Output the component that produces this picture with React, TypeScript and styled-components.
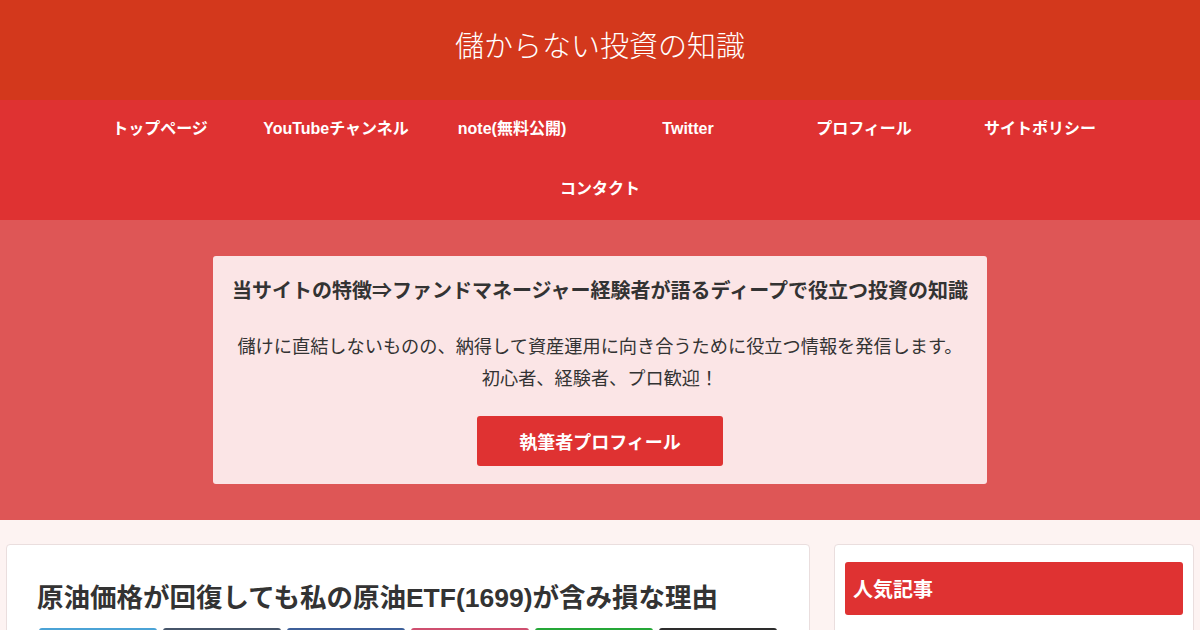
import styled, { createGlobalStyle } from 'styled-components';

const GlobalStyle = createGlobalStyle`
  body {
    margin: 0;
    background: #fdf3f2;
    font-family: 'Liberation Sans', 'Noto Sans CJK JP', sans-serif;
    color: #333;
  }
`;

const menuItems = [
  'トップページ',
  'YouTubeチャンネル',
  'note(無料公開)',
  'Twitter',
  'プロフィール',
  'サイトポリシー',
  'コンタクト',
];

const shareColors = ['#4ba3d6', '#46556a', '#3d5f99', '#cf4f6f', '#25a738', '#2d2d2d'];

export default function App() {
  return (
    <>
      <GlobalStyle />
      <Header>
        <SiteName>儲からない投資の知識</SiteName>
      </Header>
      <Nav>
        <Menu>
          {menuItems.map((item, index) => (
            <MenuItem key={index}>{item}</MenuItem>
          ))}
        </Menu>
      </Nav>
      <Appeal>
        <AppealCard>
          <AppealTitle>当サイトの特徴⇒ファンドマネージャー経験者が語るディープで役立つ投資の知識</AppealTitle>
          <AppealText>
            儲けに直結しないものの、納得して資産運用に向き合うために役立つ情報を発信します。
            <br />
            初心者、経験者、プロ歓迎！
          </AppealText>
          <AppealButton>執筆者プロフィール</AppealButton>
        </AppealCard>
      </Appeal>
      <Content>
        <Main>
          <EntryTitle>原油価格が回復しても私の原油ETF(1699)が含み損な理由</EntryTitle>
          <ShareRow>
            {shareColors.map((color, index) => (
              <ShareButton key={index} $color={color} />
            ))}
          </ShareRow>
        </Main>
        <Sidebar>
          <WidgetTitle>人気記事</WidgetTitle>
        </Sidebar>
      </Content>
    </>
  );
}

const Header = styled.header`
  height: 100px;
  background: #d3381c;
  display: flex;
  justify-content: center;
  align-items: center;
`;

const SiteName = styled.div`
  color: #fff;
  font-size: 29px;
  font-family: 'Noto Sans CJK JP', sans-serif;
  font-weight: 300;
  margin-top: -12px;
`;

const Nav = styled.nav`
  background: #df3232;
  display: flex;
  justify-content: center;
`;

const Menu = styled.ul`
  list-style: none;
  margin: 0;
  padding: 0;
  width: 1056px;
  display: flex;
  flex-wrap: wrap;
  justify-content: center;
`;

const MenuItem = styled.li`
  width: 176px;
  height: 60px;
  line-height: 20px;
  display: flex;
  align-items: center;
  justify-content: center;
  color: #fff;
  font-weight: bold;
  font-size: 16px;
  padding-bottom: 3px;
  box-sizing: border-box;
`;

const Appeal = styled.section`
  background: #de5656;
  padding: 36px 0;
  display: flex;
  justify-content: center;
`;

const AppealCard = styled.div`
  width: 774px;
  height: 228px;
  box-sizing: border-box;
  background: #fbe5e6;
  border-radius: 3px;
  padding-top: 21px;
  display: flex;
  flex-direction: column;
  align-items: center;
`;

const AppealTitle = styled.div`
  font-weight: bold;
  font-size: 20px;
  line-height: 28px;
  color: #333;
  white-space: nowrap;
`;

const AppealText = styled.p`
  margin: 26px 0 0;
  font-size: 18.2px;
  line-height: 32px;
  text-align: center;
  color: #333;
  white-space: nowrap;
`;

const AppealButton = styled.div`
  margin-top: 21px;
  width: 246px;
  height: 50px;
  border-radius: 3px;
  background: #df3232;
  color: #fff;
  font-weight: bold;
  font-size: 18px;
  display: flex;
  align-items: center;
  justify-content: center;
`;

const Content = styled.div`
  display: flex;
  gap: 24px;
  padding: 24px 6px 0;
`;

const Main = styled.main`
  width: 804px;
  height: 120px;
  box-sizing: border-box;
  background: #fff;
  border: 1px solid #eadede;
  border-radius: 4px;
  padding: 33px 30px 0;
`;

const EntryTitle = styled.h1`
  margin: 0;
  font-size: 26.5px;
  line-height: 40px;
  font-weight: bold;
  color: #333;
`;

const ShareRow = styled.div`
  display: flex;
  gap: 6px;
  margin-top: 10px;
  padding-left: 2px;
`;

const ShareButton = styled.div<{ $color: string }>`
  width: 118px;
  height: 40px;
  border-radius: 3px;
  background: ${({ $color }) => $color};
`;

const Sidebar = styled.aside`
  width: 360px;
  height: 120px;
  box-sizing: border-box;
  background: #fff;
  border: 1px solid #eadede;
  border-radius: 4px;
  padding: 17px 10px 0;
`;

const WidgetTitle = styled.h3`
  margin: 0;
  height: 53px;
  border-radius: 3px;
  background: #df3232;
  color: #fff;
  font-size: 20px;
  font-weight: bold;
  display: flex;
  align-items: center;
  padding-left: 8px;
`;
